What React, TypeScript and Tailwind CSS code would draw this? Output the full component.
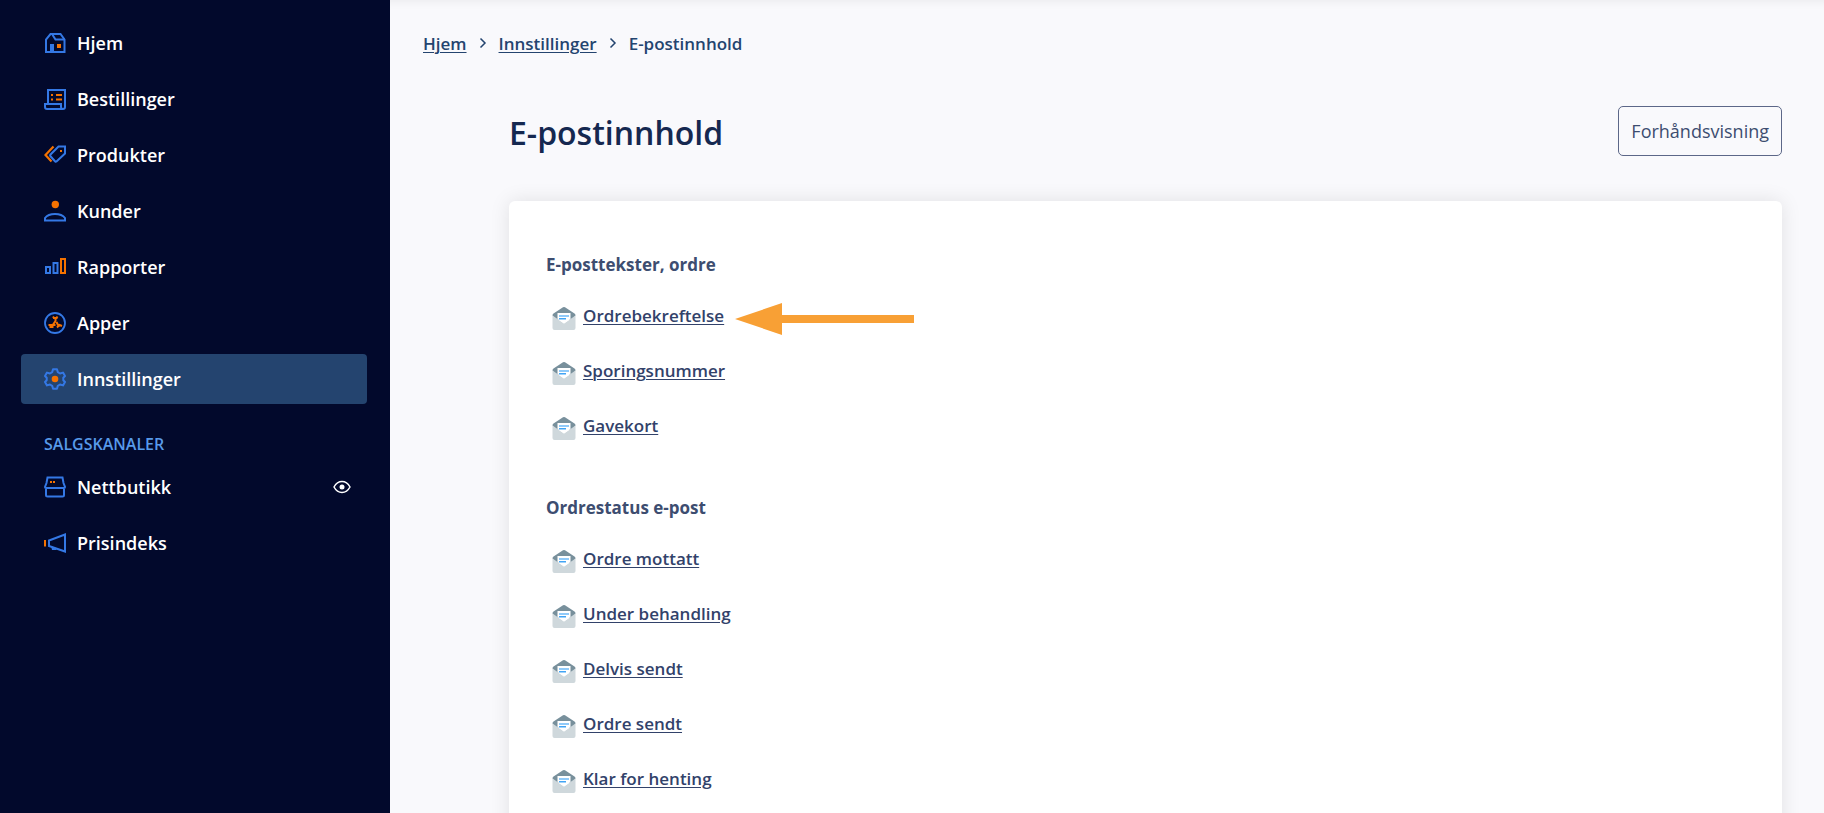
import type { ReactNode } from 'react';
import { clsx } from 'clsx';

const BLUE = '#3478e5';
const ORANGE = '#f57200';

// Sidebar icons, all drawn on a 22x22 grid
const icons: Record<string, ReactNode> = {
  home: (
    <>
      <path d="M2 20V7.500L6.500 2h10L20.500 7.500V20H2z" stroke={BLUE} strokeWidth="2" />
      <path d="M8 2l3.500 5.500h9" stroke={BLUE} strokeWidth="2" />
      <path d="M6 12h4v8H6z" fill={BLUE} />
      <path d="M13 12h4v4h-4z" fill={ORANGE} />
    </>
  ),
  orders: (
    <>
      <path d="M4 15V2h17v17q0 2-2 2H3q-2 0-2-2v-3h16v3q0 2 2 2" stroke={BLUE} strokeWidth="2" />
      <path d="M7 7h2M12 7h6M7 11.500h2M12 11.500h6" stroke={ORANGE} strokeWidth="2" />
    </>
  ),
  products: (
    <>
      <path d="M9.500 2.500L1.500 11l6 6.500" stroke={ORANGE} strokeWidth="2.200" />
      <path d="M14.500 2.500H21v7l-8.500 8q-.7.500-1.300 0L6.300 12q-.5-.7 0-1.300z" stroke={BLUE} strokeWidth="2" />
      <path d="M16 6h2v2h-2z" fill={ORANGE} />
    </>
  ),
  customers: (
    <>
      <circle cx="11.300" cy="4.500" r="3.700" fill={ORANGE} />
      <path d="M1 20.500v-2.500Q4 14 11 14t10 4v2.500z" stroke={BLUE} strokeWidth="2" />
    </>
  ),
  reports: (
    <>
      <path d="M2 11h4v6H2zM9.500 7h4v10h-4z" stroke={BLUE} strokeWidth="2" />
      <path d="M17 3h4v14h-4z" stroke={ORANGE} strokeWidth="2" />
    </>
  ),
  apps: (
    <>
      <circle cx="11" cy="11" r="10" stroke={BLUE} strokeWidth="1.800" />
      <path d="M9 4.500l1 1.500M13.500 4.500l-1 1.500M9 6h4.500M11.500 5v4L8 14M4.500 13h7M6.500 13v3M8.500 13v3M12.500 10l2.500 5M13 15.500l2.500-2.500 2.500 1" stroke={ORANGE} strokeWidth="2" />
    </>
  ),
  settings: (
    <>
      <path
        d="M9 1.200h4l.8 3 2.200 1.300 3-.9 2 3.400-1.700 1.800v2.400L21 14l-2 3.400-3-.9-2.200 1.300-.8 3H9l-.8-3L6 16.500l-3 .9L1 14l1.700-1.800V9.800L1 8l2-3.400 3 .9 2.200-1.300z"
        stroke={BLUE}
        strokeWidth="2"
        strokeLinejoin="round"
      />
      <circle cx="11" cy="11" r="3.300" fill={ORANGE} />
    </>
  ),
  store: (
    <>
      <path d="M2 12v7q0 1.500 1.500 1.500h15q1.500 0 1.500-1.500v-7M3.500 1.500h15l1 5.500L21 11q0 1-1 1H2q-1 0-1-1l1.500-4z" stroke={BLUE} strokeWidth="2" />
      <path d="M6 5h2v2H6zM9 5h2v2H9z" fill={ORANGE} />
    </>
  ),
  priceIndex: (
    <>
      <path d="M1 8v6.500" stroke={ORANGE} strokeWidth="2" />
      <path d="M21 2.500v17L5 14V8.500z" stroke={BLUE} strokeWidth="2" />
      <path d="M7 14l1 4h4l1-1.500" fill={BLUE} />
    </>
  ),
};

const mainMenu = [
  { label: 'Hjem', icon: 'home' },
  { label: 'Bestillinger', icon: 'orders' },
  { label: 'Produkter', icon: 'products' },
  { label: 'Kunder', icon: 'customers' },
  { label: 'Rapporter', icon: 'reports' },
  { label: 'Apper', icon: 'apps' },
  { label: 'Innstillinger', icon: 'settings', active: true },
];

const mailGroups = [
  {
    title: 'E-posttekster, ordre',
    links: ['Ordrebekreftelse', 'Sporingsnummer', 'Gavekort'],
  },
  {
    title: 'Ordrestatus e-post',
    links: ['Ordre mottatt', 'Under behandling', 'Delvis sendt', 'Ordre sendt', 'Klar for henting'],
  },
];

function MenuLink({ label, icon, active }: { label: string; icon: string; active?: boolean }) {
  return (
    <a
      href="#"
      aria-current={active ? 'page' : undefined}
      className={clsx(
        'flex h-[50px] flex-1 items-center gap-[11px] rounded px-[23px] text-lg font-semibold text-white',
        active && 'bg-[#24446f]'
      )}
    >
      <svg viewBox="0 0 22 22" className="size-[22px] shrink-0" fill="none" aria-hidden="true">
        {icons[icon]}
      </svg>
      {label}
    </a>
  );
}

function Chevron() {
  return (
    <svg viewBox="0 0 8 12" className="mb-0.5 h-3 w-2" fill="none" aria-hidden="true">
      <path d="M1.500 1.500L6 6l-4.500 4.500" stroke="#24446f" strokeWidth="1.500" />
    </svg>
  );
}

function MailIcon() {
  return (
    <svg viewBox="0 0 24 24" className="size-6 shrink-0" aria-hidden="true">
      <path d="M.5 9.500Q.5 8 1.500 7.500L11 1.200q1-.6 2 0l9.500 6.300q1 .5 1 2L20 14H4z" fill="#78909c" />
      <path d="M.5 9.500L12 17.500l11.500-8V22q0 2-2 2h-19q-2 0-2-2z" fill="#cfd8dc" />
      <path d="M5.500 7H18.500v6L12 17.500 5.500 13z" fill="#fff" />
      <path d="M7 9h10v2H7z" fill="#90caf9" />
      <path d="M7 12h7v1.500H7z" fill="#42a5f5" />
    </svg>
  );
}

export default function App() {
  return (
    <div className="flex h-screen overflow-hidden bg-[#f9f9fc] font-['Open_Sans','Noto_Sans',sans-serif]">
      <aside className="w-[390px] shrink-0 bg-[#02092c] pt-[18px] pr-[23px] pl-[21px]">
        <nav aria-label="Hovedmeny">
          <ul className="flex flex-col gap-1.5">
            {mainMenu.map((item) => (
              <li key={item.label} className="flex">
                <MenuLink {...item} />
              </li>
            ))}
          </ul>
          <h2 className="mt-7 mb-1.5 px-[23px] text-base leading-6 font-semibold text-[#589aea]">SALGSKANALER</h2>
          <ul className="flex flex-col gap-1.5">
            <li className="flex items-center">
              <MenuLink label="Nettbutikk" icon="store" />
              <button type="button" aria-label="Vis nettbutikk" className="mr-4">
                <svg viewBox="0 0 18 14" className="h-3.5 w-[18px]" fill="none" aria-hidden="true">
                  <path d="M1 7q3-5.500 8-5.500T17 7q-3 5.500-8 5.500T1 7z" stroke="#fff" strokeWidth="1.500" />
                  <circle cx="9" cy="7" r="2.500" fill="#fff" />
                </svg>
              </button>
            </li>
            <li className="flex">
              <MenuLink label="Prisindeks" icon="priceIndex" />
            </li>
          </ul>
        </nav>
      </aside>

      <main className="min-w-0 flex-1 overflow-hidden pr-[42px] pl-[33px] shadow-[inset_0_10px_10px_-8px_rgba(0,0,0,0.06)]">
        <nav aria-label="Brødsmulesti" className="pt-8">
          <ol className="flex items-center gap-3 text-[17px] leading-6 font-semibold text-[#24446f]">
            <li><a href="#" className="underline decoration-1 underline-offset-2">Hjem</a></li>
            <li><Chevron /></li>
            <li><a href="#" className="underline decoration-1 underline-offset-2">Innstillinger</a></li>
            <li><Chevron /></li>
            <li aria-current="page">E-postinnhold</li>
          </ol>
        </nav>

        <div className="pl-[86px]">
          <header className="mt-[50px] flex h-[50px] items-center justify-between">
            <h1 className="pt-1 text-[32px] leading-10 font-semibold text-[#152850]">E-postinnhold</h1>
            <button
              type="button"
              className="h-[50px] rounded-[5px] border border-[#5c6788] px-3 text-lg text-[#3d4d70]"
            >
              Forhåndsvisning
            </button>
          </header>

          <div className="mt-[45px] rounded-md bg-white px-[37px] pt-[52px] pb-10 shadow-[0_0_20px_rgba(0,0,0,0.1)]">
            {mailGroups.map((group) => (
              <section key={group.title} className="mb-[41px]">
                <h2 className="text-[17px] leading-6 font-bold text-[#3d4d70]">{group.title}</h2>
                <ul className="mt-[13px]">
                  {group.links.map((link) => (
                    <li key={link} className="flex h-[55px] items-center gap-[7px] pl-1.5">
                      <MailIcon />
                      <a
                        href="#"
                        className="pb-1 text-[17px] leading-6 font-semibold text-[#32426a] underline decoration-1 underline-offset-2"
                      >
                        {link}
                      </a>
                      {link === 'Ordrebekreftelse' && (
                        <svg viewBox="0 0 180 32" className="mt-0.5 ml-1 h-8 w-[180px]" aria-hidden="true">
                          <path d="M0 16L47 0v12h132v8H47v12z" fill="#f8a035" />
                        </svg>
                      )}
                    </li>
                  ))}
                </ul>
              </section>
            ))}
          </div>
        </div>
      </main>
    </div>
  );
}
